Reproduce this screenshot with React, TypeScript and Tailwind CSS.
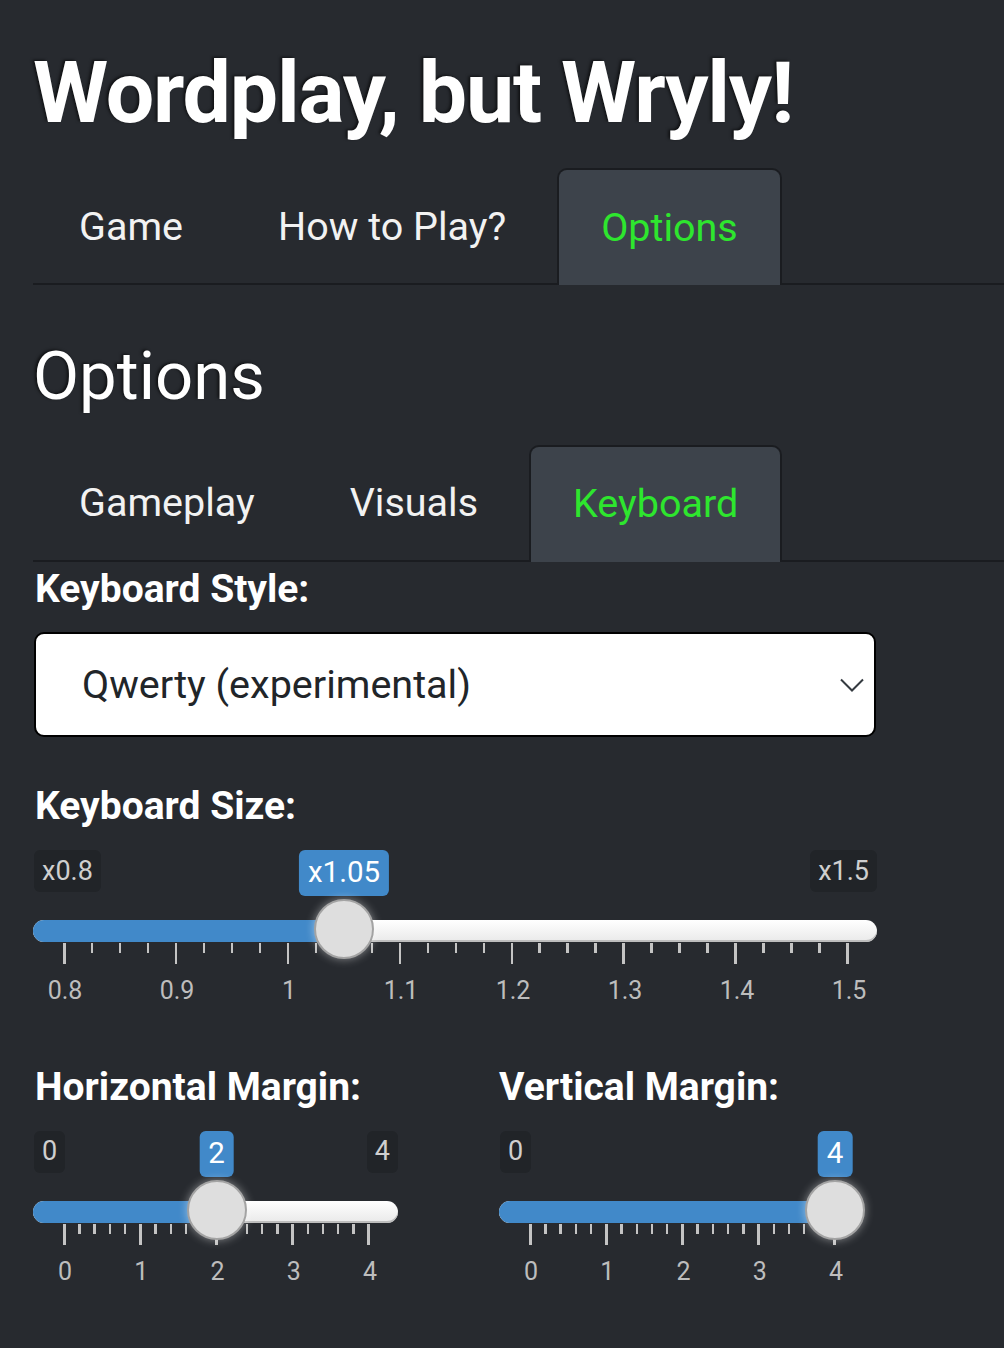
import React from "react";

type SliderProps = {
  width: number;
  min: number;
  max: number;
  value: number;
  labels: string[];
  minorsPer: number;
  fmt: (v: number) => string;
};

function Slider({ width, min, max, value, labels, minorsPer, fmt }: SliderProps) {
  const off = 31;
  const inner = width - 60;
  const frac = (value - min) / (max - min);
  const hx = off + frac * inner;
  const intervals = labels.length - 1;
  const ticks: boolean[] = [];
  for (let i = 0; i <= intervals; i++) {
    ticks.push(true);
    if (i < intervals) for (let j = 0; j < minorsPer; j++) ticks.push(false);
  }
  const hideMax = frac > 0.9;
  const hideMin = frac < 0.1;
  return (
    <div className="relative" style={{ width }}>
      <div className="flex justify-between items-start h-[46px]">
        <div
          className={
            hideMin
              ? "invisible h-[42px] ml-[1px] px-[8px] flex items-center rounded-[6px] bg-[#212428] text-[27px] text-[#cfcfcf] leading-none"
              : "h-[42px] ml-[1px] px-[8px] flex items-center rounded-[6px] bg-[#212428] text-[27px] text-[#cfcfcf] leading-none"
          }
        >
          {fmt(min)}
        </div>
        <div
          className={
            hideMax
              ? "invisible h-[42px] px-[8px] flex items-center rounded-[6px] bg-[#212428] text-[27px] text-[#cfcfcf] leading-none"
              : "h-[42px] px-[8px] flex items-center rounded-[6px] bg-[#212428] text-[27px] text-[#cfcfcf] leading-none"
          }
        >
          {fmt(max)}
        </div>
      </div>
      <div
        className="absolute top-0 h-[46px] px-[9px] flex items-center rounded-[6px] bg-[#4189c9] text-[29.5px] text-white leading-none -translate-x-1/2 z-10"
        style={{ left: hx }}
      >
        {fmt(value)}
      </div>
      <div className="mt-[24px] h-[22px] rounded-full bg-[linear-gradient(to_bottom,#ffffff,#e9e9e9)] shadow-[inset_0_-2px_0_#bdbdbd] flex">
        <div className="h-full rounded-l-full bg-[#4189c9]" style={{ width: hx }} />
      </div>
      <div className="mt-[1px] pl-[30px] pr-[28px] flex justify-between items-start h-[21px]">
        {ticks.map((major, i) => (
          <div
            key={i}
            className={major ? "h-[21px] w-[2.5px] bg-[#c4c4c4]" : "h-[10px] w-[2.5px] bg-[#c4c4c4]"}
          />
        ))}
      </div>
      <div className="mt-[14px] pl-[32px] pr-[28px] flex justify-between">
        {labels.map((l) => (
          <div key={l} className="w-0 flex justify-center">
            <span className="text-[25px] leading-[25px] text-[#bdbdbd] whitespace-nowrap">{l}</span>
          </div>
        ))}
      </div>
      <div
        className="absolute top-[49px] w-[60px] h-[60px] rounded-full bg-[#dedede] border-2 border-[#a3a3a3] shadow-[0_0_10px_rgba(255,255,255,0.45)] -translate-x-1/2 z-20"
        style={{ left: hx }}
      />
    </div>
  );
}

function Tabs({ items, active, mt }: { items: string[]; active: string; mt: string }) {
  return (
    <div className={`flex gap-[7px] pl-[2px] border-b-2 border-[#1a1c20] ${mt}`}>
      {items.map((it) =>
        it === active ? (
          <div
            key={it}
            className="h-[117px] -mb-[2px] px-[42px] flex items-center rounded-t-[10px] border-2 border-b-0 border-[#1a1c20] bg-[#3d434b] text-[39.5px] text-[#2ee62e]"
          >
            {it}
          </div>
        ) : (
          <div
            key={it}
            className="h-[117px] -mb-[2px] px-[44px] flex items-center text-[39.5px] text-[#f2f2f2]"
          >
            {it}
          </div>
        )
      )}
    </div>
  );
}

export default function App() {
  return (
    <div className="min-h-[1348px] w-full bg-[#272a2f] pl-[33px] [font-family:Roboto,sans-serif] overflow-hidden">
      <h1 className="mt-[41px] text-[86px] leading-[1.2] tracking-[-1.2px] font-bold text-white [text-shadow:-2px_-1px_3px_rgba(0,0,0,0.6)] whitespace-nowrap">
        Wordplay, but Wryly!
      </h1>
      <Tabs items={["Game", "How to Play?", "Options"]} active="Options" mt="mt-[24px]" />
      <h2 className="mt-[51px] text-[67px] leading-[1.2] text-white [text-shadow:-2px_-1px_3px_rgba(0,0,0,0.6)]">
        Options
      </h2>
      <Tabs items={["Gameplay", "Visuals", "Keyboard"]} active="Keyboard" mt="mt-[28px]" />
      <div className="mt-[4px] pl-[2px] text-[39px] leading-[1.2] font-bold text-white">Keyboard Style:</div>
      <div className="mt-[20px] ml-[1px] w-[842px] h-[105px] rounded-[10px] border-2 border-black bg-white flex items-center justify-between pl-[46px] pr-[10px]">
        <span className="text-[39.5px] text-[#212529]">Qwerty (experimental)</span>
        <svg width="24" height="14" viewBox="0 0 24 14" fill="none">
          <path d="M1 1.5 L12 12.5 L23 1.5" stroke="#343a40" strokeWidth="2" />
        </svg>
      </div>
      <div className="mt-[46px] pl-[2px] text-[39px] leading-[1.2] font-bold text-white">Keyboard Size:</div>
      <div className="mt-[20px]">
        <Slider
          width={844}
          min={0.8}
          max={1.5}
          value={1.05}
          labels={["0.8", "0.9", "1", "1.1", "1.2", "1.3", "1.4", "1.5"]}
          minorsPer={3}
          fmt={(v) => "x" + String(v)}
        />
      </div>
      <div className="mt-[61px] flex">
        <div className="w-[466px]">
          <div className="pl-[2px] text-[39px] leading-[1.2] font-bold text-white whitespace-nowrap">
            Horizontal Margin:
          </div>
          <div className="mt-[20px]">
            <Slider width={365} min={0} max={4} value={2} labels={["0", "1", "2", "3", "4"]} minorsPer={4} fmt={(v) => String(v)} />
          </div>
        </div>
        <div>
          <div className="text-[39px] leading-[1.2] font-bold text-white whitespace-nowrap">
            Vertical Margin:
          </div>
          <div className="mt-[20px]">
            <Slider width={365} min={0} max={4} value={4} labels={["0", "1", "2", "3", "4"]} minorsPer={4} fmt={(v) => String(v)} />
          </div>
        </div>
      </div>
    </div>
  );
}
